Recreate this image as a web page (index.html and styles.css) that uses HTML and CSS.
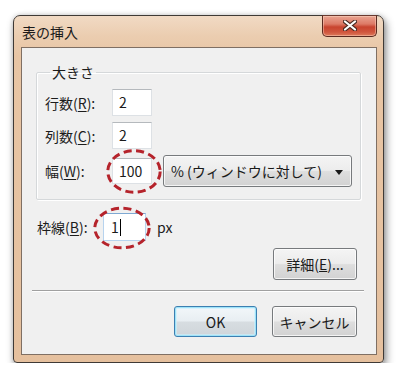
FILE: index.html
```html
<!DOCTYPE html>
<html lang="ja">
<head>
<meta charset="utf-8">
<title>表の挿入</title>
<link rel="stylesheet" href="styles.css">
</head>
<body>
<div class="window">
  <div class="titlebar">
    <span class="title">表の挿入</span>
    <button class="close" aria-label="閉じる">
      <svg width="14" height="11" viewBox="0 0 14 11">
        <path d="M2 1.5 L12 9.5 M12 1.5 L2 9.5" stroke="#4a2a22" stroke-width="4.2" stroke-linecap="round" fill="none"/>
        <path d="M2 1.5 L12 9.5 M12 1.5 L2 9.5" stroke="#ffffff" stroke-width="2.2" stroke-linecap="round" fill="none"/>
      </svg>
    </button>
  </div>
  <div class="client">
    <fieldset class="group">
      <legend class="legend">大きさ</legend>
      <div class="row">
        <label class="label">行数(<u>R</u>):</label>
        <div class="field">2</div>
      </div>
      <div class="row">
        <label class="label">列数(<u>C</u>):</label>
        <div class="field">2</div>
      </div>
      <div class="row row-tall">
        <label class="label">幅(<u>W</u>):</label>
        <div class="field marked">100
          <svg class="oval oval-a" width="56" height="45" viewBox="0 0 56 45">
            <ellipse cx="28" cy="22.5" rx="26.2" ry="20.8" fill="none" stroke="#b5232b" stroke-width="3" stroke-dasharray="8 4.5"/>
          </svg>
        </div>
        <button class="btn dropdown">% (ウィンドウに対して)<span class="arrow"></span></button>
      </div>
    </fieldset>
    <div class="row border-row">
      <label class="label label-b">枠線(<u>B</u>):</label>
      <div class="field focused">1<span class="caret"></span>
        <svg class="oval oval-b" width="58" height="44" viewBox="0 0 58 44">
          <ellipse cx="29" cy="22" rx="27.2" ry="19.8" fill="none" stroke="#b5232b" stroke-width="3" stroke-dasharray="8 4.5"/>
        </svg>
      </div>
      <span class="unit">px</span>
    </div>
    <div class="advanced">
      <button class="btn btn-detail">詳細(<u>E</u>)...</button>
    </div>
    <div class="separator"></div>
    <div class="actions">
      <button class="btn btn-ok">OK</button>
      <button class="btn btn-cancel">キャンセル</button>
    </div>
  </div>
</div>
</body>
</html>
```
FILE: styles.css
```css
html, body {
  margin: 0;
  padding: 0;
  background: #ffffff;
}
body {
  font-family: "Noto Sans CJK JP", "Noto Sans", sans-serif;
  font-size: 14px;
  color: #1c1c1c;
}
.window {
  box-sizing: border-box;
  width: 371px;
  height: 348px;
  margin: 15px 0 0 13px;
  border: 1px solid #3f3a36;
  border-radius: 7px 7px 4px 4px;
  background: linear-gradient(180deg, #f1dac4 0px, #ebcdb0 20px, #e8c5a4 40px, #e5c09e 100%);
  padding: 0 6px 7px 7px;
  display: flex;
  flex-direction: column;
  box-shadow: 2px 4px 9px rgba(0, 0, 0, 0.45), 0 0 4px rgba(0, 0, 0, 0.15);
}
.titlebar {
  height: 31px;
  display: flex;
  align-items: center;
  justify-content: space-between;
  padding-left: 1px;
}
.title {
  font-size: 14px;
  line-height: 18px;
  color: #1a1a1a;
  margin-top: 1px;
}
.close {
  align-self: flex-start;
  margin-top: -1px;
  width: 55px;
  height: 22px;
  padding: 0;
  border: 1px solid #5a2a20;
  border-top-color: #6a3a30;
  border-radius: 0 0 5px 5px;
  background: linear-gradient(180deg, #e9a592 0%, #dd7a66 40%, #c8442f 55%, #d0563e 80%, #dc7a5c 100%);
  box-shadow: inset 0 0 0 1px rgba(255, 220, 200, 0.45);
  display: flex;
  align-items: center;
  justify-content: center;
}
.close svg { display: block; margin-top: -1px; }
.client {
  flex: 1;
  border: 1px solid #7f6f63;
  background: #f0f0f0;
  display: flex;
  flex-direction: column;
}
.group {
  margin: 15px 15px 0 14px;
  padding: 8px 0 12px 8px;
  border: 1px solid #d5d8da;
  box-shadow: inset 1px 1px 0 #ffffff, 1px 1px 0 #ffffff;
  border-radius: 2px;
  display: flex;
  flex-direction: column;
  gap: 6px;
  min-inline-size: 0;
}
.legend {
  margin-left: 5px;
  padding: 0 2px;
  line-height: 18px;
  color: #1c1c1c;
}
.row {
  display: flex;
  align-items: center;
  height: 27px;
}
.row-tall { height: 32px; }
.label {
  width: 67px;
  line-height: 18px;
  white-space: nowrap;
}
.label u { text-underline-offset: 2px; }
.field {
  position: relative;
  box-sizing: border-box;
  width: 40px;
  height: 27px;
  background: #ffffff;
  border: 1px solid #dde1e5;
  border-top-color: #b5b9bd;
  padding-left: 6px;
  line-height: 25px;
  font-size: 14px;
  color: #1a1a1a;
}
.field.marked { margin-right: 11px; height: 26px; }
.oval {
  position: absolute;
  pointer-events: none;
}
.oval-a { left: -7px; top: -10px; }
.oval-b { left: -11px; top: -8px; }
.btn {
  box-sizing: border-box;
  font-family: inherit;
  font-size: 14px;
  color: #1a1a1a;
  border: 1px solid #777a7d;
  border-radius: 3px;
  background: linear-gradient(180deg, #f4f4f4 0%, #ececec 48%, #dedede 52%, #d2d2d2 100%);
  box-shadow: inset 0 0 0 1px rgba(255, 255, 255, 0.75);
  padding: 0;
  display: flex;
  align-items: center;
  justify-content: center;
}
.dropdown {
  width: 189px;
  height: 32px;
  justify-content: flex-start;
  padding-left: 7px;
}
.arrow {
  margin-left: 13px;
  width: 0;
  height: 0;
  border-left: 4px solid transparent;
  border-right: 4px solid transparent;
  border-top: 5px solid #1a1a1a;
  margin-top: 2px;
}
.border-row {
  margin-top: 13px;
  padding-left: 15px;
  height: 28px;
}
.label-b { width: 66px; }
.field.focused {
  width: 43px;
  height: 28px;
  border-color: #b7d3ee;
  border-top-color: #7fa9d3;
  line-height: 26px;
  padding-left: 7px;
}
.caret {
  display: inline-block;
  width: 1px;
  height: 17px;
  background: #000;
  vertical-align: -3px;
  margin-left: 1px;
}
.unit {
  margin-left: 11px;
  line-height: 18px;
}
.advanced {
  display: flex;
  justify-content: flex-end;
  margin-top: 7px;
  padding-right: 19px;
}
.btn-detail { width: 84px; height: 32px; }
.separator {
  margin: 10px 12px 0 10px;
  height: 0;
  border-top: 1px solid #a0a0a0;
  border-bottom: 1px solid #ffffff;
}
.actions {
  display: flex;
  justify-content: flex-end;
  gap: 15px;
  margin-top: 14px;
  padding-right: 19px;
}
.btn-ok {
  width: 83px;
  height: 31px;
  border-color: #3c7fb1;
  box-shadow: inset 0 0 0 1px #9fe3f8, inset 0 0 0 2px rgba(200, 240, 255, 0.6);
  background: linear-gradient(180deg, #f2f7fa 0%, #e8eef2 48%, #d7dde1 52%, #cfd5da 100%);
}
.btn-cancel { width: 85px; height: 31px; }
```
